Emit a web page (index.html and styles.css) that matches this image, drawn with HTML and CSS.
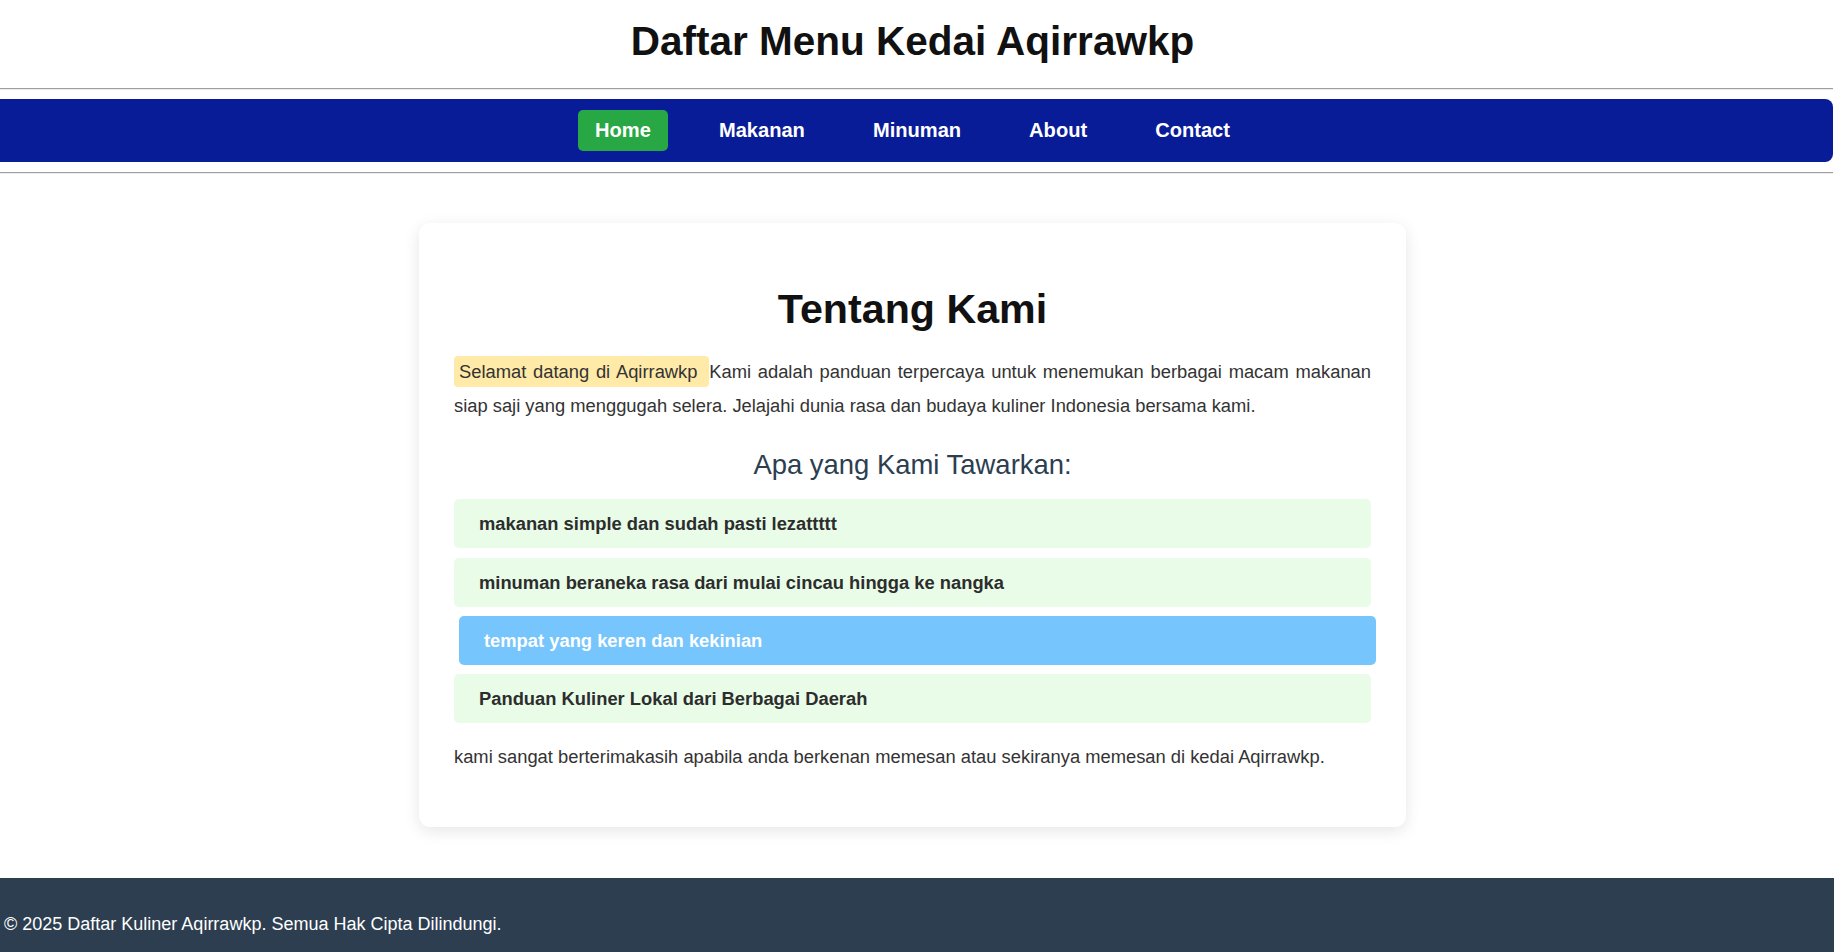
FILE: index.html
```html
<!DOCTYPE html>
<html lang="id">
<head>
<meta charset="utf-8">
<title>Daftar Menu Kedai Aqirrawkp</title>
<link rel="stylesheet" href="styles.css">
</head>
<body>
<div class="page">
  <header class="site-header">
    <h1 class="site-title">Daftar Menu Kedai Aqirrawkp</h1>
  </header>
  <hr class="rule">
  <nav class="main-nav">
    <ul class="nav-list">
      <li><a class="nav-link active" href="#">Home</a></li>
      <li><a class="nav-link" href="#">Makanan</a></li>
      <li><a class="nav-link" href="#">Minuman</a></li>
      <li><a class="nav-link" href="#">About</a></li>
      <li><a class="nav-link" href="#">Contact</a></li>
    </ul>
  </nav>
  <hr class="rule">
  <main class="content">
    <section class="card">
      <h2 class="card-title">Tentang Kami</h2>
      <p class="intro"><span class="highlight">Selamat datang di Aqirrawkp </span>Kami adalah panduan terpercaya untuk menemukan berbagai macam makanan siap saji yang menggugah selera. Jelajahi dunia rasa dan budaya kuliner Indonesia bersama kami.</p>
      <h3 class="offer-title">Apa yang Kami Tawarkan:</h3>
      <ul class="offer-list">
        <li class="offer-item">makanan simple dan sudah pasti lezattttt</li>
        <li class="offer-item">minuman beraneka rasa dari mulai cincau hingga ke nangka</li>
        <li class="offer-item is-hover">tempat yang keren dan kekinian</li>
        <li class="offer-item">Panduan Kuliner Lokal dari Berbagai Daerah</li>
      </ul>
      <p class="closing">kami sangat berterimakasih apabila anda berkenan memesan atau sekiranya memesan di kedai Aqirrawkp.</p>
    </section>
  </main>
</div>
<footer class="site-footer">© 2025 Daftar Kuliner Aqirrawkp. Semua Hak Cipta Dilindungi.</footer>
</body>
</html>
```

FILE: styles.css
```css
html, body {
  margin: 0;
  padding: 0;
  background: #ffffff;
}

body {
  font-family: "Liberation Sans", Arial, sans-serif;
  font-size: 18.35px;
  color: #333333;
}

.page {
  margin: 0 1px 0 -8px;
}

.site-header {
  text-align: center;
}

.site-title {
  margin: 18px 0 24px;
  font-size: 40.5px;
  font-weight: bold;
  line-height: 46.3px;
  color: #111111;
}

.rule {
  margin: 9.15px 0;
  border: 0;
  border-top: 1px solid #a0a0a0;
  border-bottom: 1px solid #ececec;
  height: 0;
}

.main-nav {
  background: #091c97;
  border-radius: 8px;
  padding: 11px 0;
}

.nav-list {
  list-style: none;
  margin: 0;
  padding: 0;
  display: flex;
  justify-content: center;
  gap: 34px;
}

.nav-link {
  display: block;
  padding: 9px 17px;
  font-size: 20.1px;
  line-height: 23px;
  font-weight: bold;
  color: #ffffff;
  text-decoration: none;
  border-radius: 5px;
}

.nav-link.active {
  background: #28a745;
}

.content {
  padding: 40.25px 0 51px;
  display: flex;
  justify-content: center;
}

.card {
  width: 987px;
  box-sizing: border-box;
  padding: 35px 35px 53.4px;
  background: #ffffff;
  border-radius: 11px;
  box-shadow: 0 4px 16px rgba(0, 0, 0, 0.1);
}

.card-title {
  margin: 28px 0 23px;
  text-align: center;
  font-size: 41.2px;
  line-height: 46.3px;
  font-weight: bold;
  color: #111111;
}

.intro {
  margin: 0 0 26.7px;
  line-height: 33.4px;
  text-align: justify;
  color: #333333;
}

.highlight {
  background: #ffeaa7;
  padding: 5px;
  border-radius: 4px;
}

.offer-title {
  margin: 0 0 19px;
  text-align: center;
  font-size: 27.45px;
  line-height: 31.5px;
  font-weight: normal;
  color: #2c3e50;
}

.offer-list {
  list-style: none;
  margin: 0 0 16.7px;
  padding: 0;
  display: flex;
  flex-direction: column;
  gap: 9.4px;
}

.offer-item {
  background: #e8fce8;
  padding: 14px 25px;
  line-height: 21px;
  font-weight: bold;
  color: #2d2d2d;
  border-radius: 5px;
}

.offer-item.is-hover {
  background: #77c5fd;
  color: #ffffff;
  transform: translateX(5px);
  box-shadow: 0 0 0 1px rgba(255, 255, 255, 0.35);
}

.closing {
  margin: 0;
  line-height: 33.4px;
  color: #333333;
}

.site-footer {
  background: #2c3e50;
  color: #ffffff;
  font-size: 18px;
  line-height: 20.7px;
  padding: 36.4px 4px 16.9px;
}
```
